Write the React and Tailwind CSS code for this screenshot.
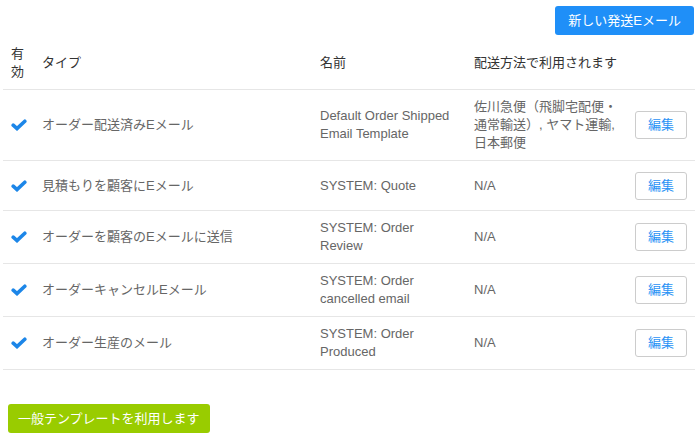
const ROWS = [
  {
    type: "オーダー配送済みEメール",
    name: "Default Order Shipped Email Template",
    methods: ["佐川急便（飛脚宅配便・", "通常輸送）, ヤマト運輸,", "日本郵便"],
  },
  { type: "見積もりを顧客にEメール", name: "SYSTEM: Quote", methods: ["N/A"] },
  { type: "オーダーを顧客のEメールに送信", name: "SYSTEM: Order Review", methods: ["N/A"] },
  { type: "オーダーキャンセルEメール", name: "SYSTEM: Order cancelled email", methods: ["N/A"] },
  { type: "オーダー生産のメール", name: "SYSTEM: Order Produced", methods: ["N/A"] },
];

function Check() {
  return (
    <svg width="16" height="12" viewBox="0 0 16 12" className="block">
      <path
        d="M2.2 6.2 L6 9.6 L13.8 2.2"
        fill="none"
        stroke="#1c86e8"
        strokeWidth="3.6"
        strokeLinecap="round"
        strokeLinejoin="miter"
      />
    </svg>
  );
}

export default function App() {
  return (
    <div
      className="w-[699px] h-[441px] bg-white px-[3px] pt-[6px] text-[13px] leading-[18px] text-[#666]"
      style={{ fontFamily: '"Liberation Sans", Arial, "Noto Sans CJK JP", sans-serif' }}
    >
      <div className="flex justify-end pr-[2px]">
        <button className="h-[29px] px-[13px] rounded-[3px] bg-[#1f8ff8] text-white text-[13px]">
          新しい発送Eメール
        </button>
      </div>

      <table className="mt-[2px] w-[692px] table-fixed border-collapse">
        <colgroup>
          <col className="w-[31px]" />
          <col className="w-[278px]" />
          <col className="w-[154px]" />
          <col className="w-[161px]" />
          <col className="w-[68px]" />
        </colgroup>
        <thead>
          <tr className="border-b border-[#e6e6e6] text-[#333]">
            <th className="px-2 py-2 text-left font-normal align-middle">有効</th>
            <th className="px-2 py-2 text-left font-normal align-middle">タイプ</th>
            <th className="px-2 py-2 text-left font-normal align-middle">名前</th>
            <th className="px-2 py-2 text-left font-normal align-middle">配送方法で利用されます</th>
            <th className="px-2 py-2" />
          </tr>
        </thead>
        <tbody>
          {ROWS.map((r) => (
            <tr key={r.type} className="border-b border-[#e6e6e6]">
              <td className="pl-2 pr-0 py-2 align-middle">
                <Check />
              </td>
              <td className="px-2 py-2 align-middle">{r.type}</td>
              <td className="px-2 py-2 align-middle">{r.name}</td>
              <td className="px-2 py-2 align-middle">
                {r.methods.map((m) => (
                  <div key={m}>{m}</div>
                ))}
              </td>
              <td className="px-2 py-2 align-middle">
                <div className="h-[33px] flex items-center">
                  <button className="w-[52px] h-[28px] border border-[#ccc] rounded-[3px] bg-white text-[#2b93f5] text-[13px]">
                    編集
                  </button>
                </div>
              </td>
            </tr>
          ))}
        </tbody>
      </table>

      <button className="mt-[34px] ml-[5px] h-[29px] px-[10px] rounded-[3px] bg-[#99cc00] text-white text-[13px]">
        一般テンプレートを利用します
      </button>
    </div>
  );
}
